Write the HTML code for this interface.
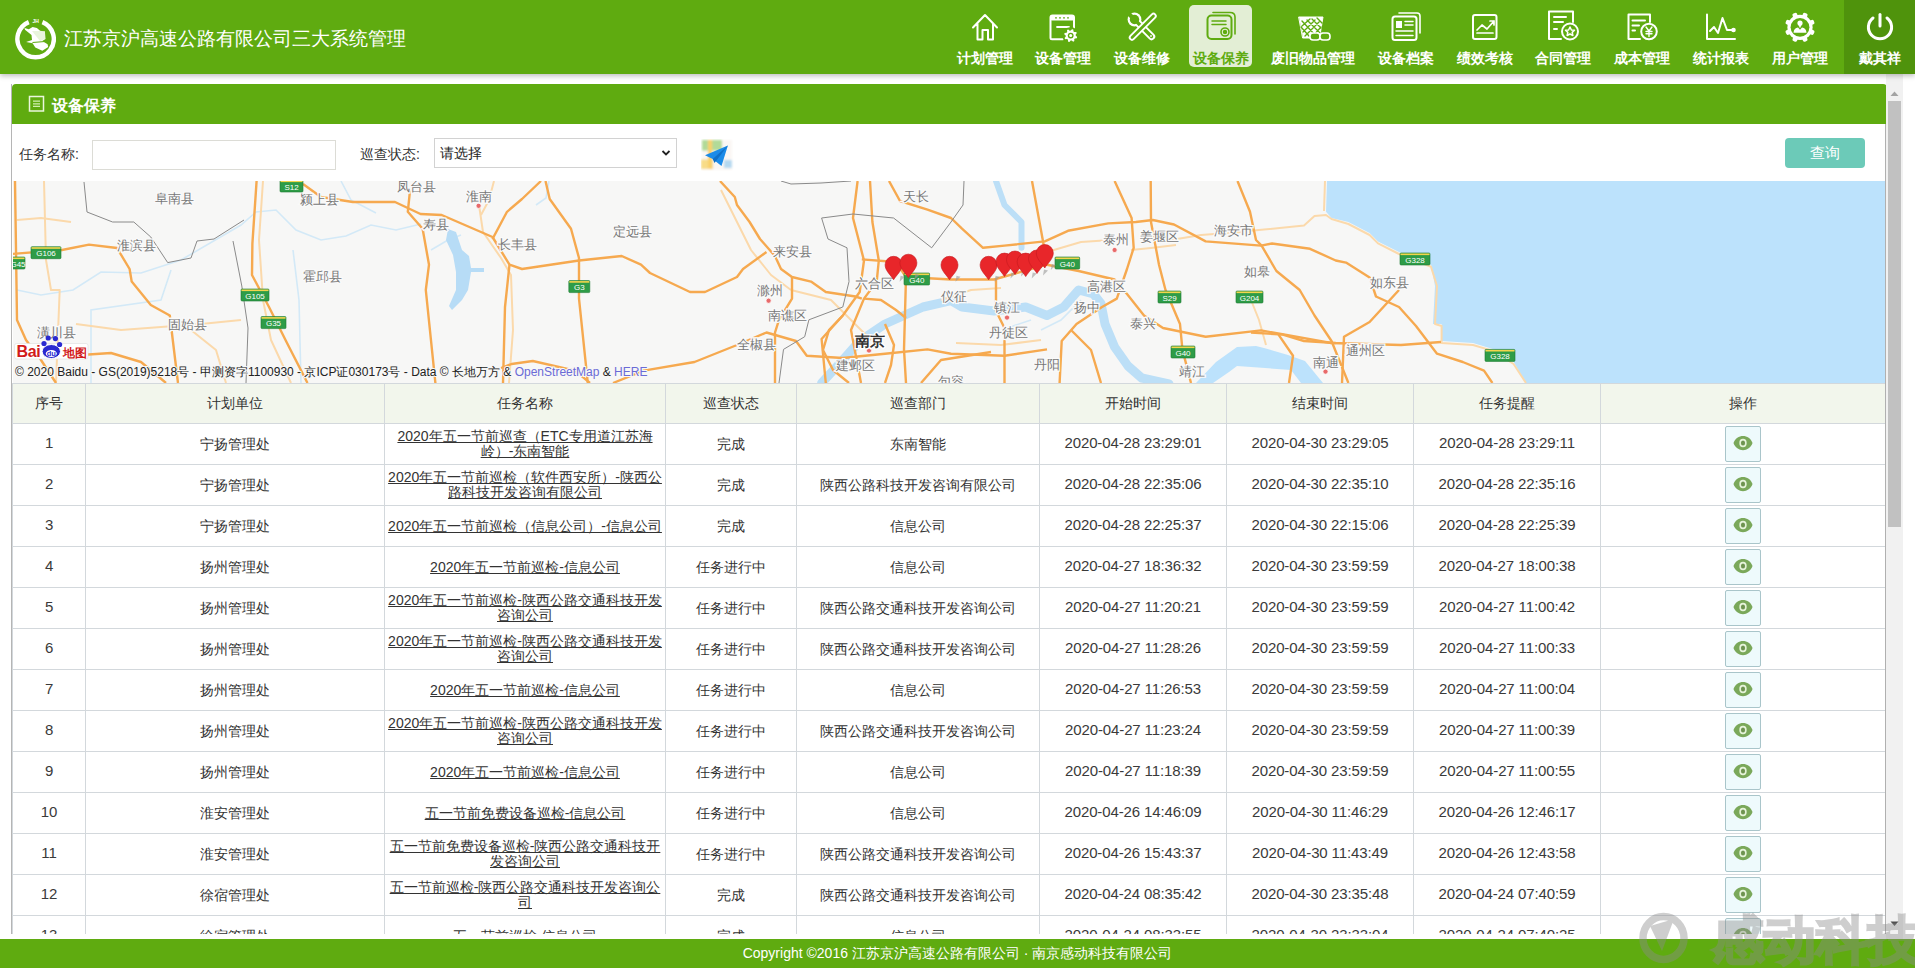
<!DOCTYPE html>
<html><head><meta charset="utf-8">
<style>
*{box-sizing:border-box;margin:0;padding:0}
html,body{width:1915px;height:968px;overflow:hidden;background:#fff;font-family:"Liberation Sans",sans-serif;color:#333}
.abs{position:absolute}
#top{left:0;top:0;width:1915px;height:74px;background:#5fab10;z-index:5;box-shadow:0 2px 5px rgba(0,0,0,.25)}

#title{left:64px;top:26.5px;font-size:18.7px;color:#fff;white-space:nowrap;line-height:24px}
.navl{top:49px;width:120px;text-align:center;font-size:14.2px;font-weight:bold;line-height:18px;white-space:nowrap}
.nav{top:0;height:74px;text-align:center;color:#fff;font-size:14.2px;font-weight:bold;white-space:nowrap}
.nav .lbl{position:absolute;left:0;right:0;top:49px;line-height:18px}
.nav svg{position:absolute;left:50%;top:11px;margin-left:-16px;width:32px;height:32px}
.nav.act .bg{position:absolute;left:0;top:5px;width:63px;height:62px;background:#e3eed5;border-radius:5px}
.nav.act{color:#5fab10}
#user{left:1843.5px;top:0;width:72px;height:74px;background:#4f930c}
#content{left:0;top:74px;width:1886px;height:860px;background:#fff;overflow:hidden}
#panel{left:11px;top:10px;width:1875px;height:880px;background:#fff;border-left:1px solid #b5b5b5}
#phead{left:0;top:0;width:1875px;height:40px;background:#5fab10;border-radius:4px 4px 0 0;color:#fff;font-weight:bold;font-size:15px}
#sb{left:1886px;top:74px;width:17px;height:865px;background:#f1f1f1}
.lbl{font-size:14px;line-height:18px;color:#333;margin-top:1.5px}
#tbl{border-collapse:collapse;table-layout:fixed;width:1873px}
#tbl th,#tbl td{border:1px solid #d3d8dc;text-align:center;font-size:14px;color:#333;font-weight:normal;padding:0 1px;height:41px;vertical-align:middle;line-height:15px}
#tbl th{height:40px;background:#f2f6ec}
#tbl td.n{font-size:15px;letter-spacing:-0.12px;color:#3a3a3a;padding-bottom:3px}
#tbl a{text-decoration:underline;color:#333}
.eye{display:inline-block;width:36px;height:36px;border:1px solid #a9c5ca;background:#eefafc;border-radius:2px;padding-top:8px;vertical-align:middle}
.eye svg{display:block;margin:0 auto}
#foot{left:0;top:939px;width:1915px;height:29px;background:#5fab10;color:#fff;font-size:14px;text-align:center;line-height:29px}
</style></head><body>
<div id="top" class="abs">
  <svg id="logo" class="abs" viewBox="0 0 42 46" style="left:14px;top:17px;width:42px;height:46px"><path d="M28.42 5.13 A18.2 18.2 0 1 1 14.78 5.13" fill="none" stroke="#fff" stroke-width="4.4"/><text x="21.6" y="5.6" font-size="5" font-weight="bold" fill="#fff" text-anchor="middle">JH</text><polygon points="10.5,11.1 14.8,12.2 18.6,10.1 22.9,11.1 26.1,13.8 30.9,14.4 31.5,21.9 28.3,24.0 33.6,27.3 34.2,29.9 28.3,33.7 21.3,30.5 18.6,26.2 12.1,25.1 18.0,23.0 17.5,18.1 11.0,12.7" fill="#fff"/><path d="M18.5 25.5 L31 24.5" stroke="#5fab10" stroke-width="1.2"/><path d="M18 14 L26 24 L31 22 L31 14Z" fill="#d8ecc4" opacity=".6"/></svg>
  <div id="title" class="abs">江苏京沪高速公路有限公司三大系统管理</div>
<div id="user" class="abs"></div>
<div class="abs" style="left:1189px;top:5px;width:63px;height:62px;background:#e3eed5;border-radius:5px"></div>
<div class="abs navl" style="left:924.5px;color:#fff">计划管理</div>
<div class="abs navl" style="left:1003px;color:#fff">设备管理</div>
<div class="abs navl" style="left:1082px;color:#fff">设备维修</div>
<div class="abs navl" style="left:1160.7px;color:#5fab10">设备保养</div>
<div class="abs navl" style="left:1253px;color:#fff">废旧物品管理</div>
<div class="abs navl" style="left:1345.5px;color:#fff">设备档案</div>
<div class="abs navl" style="left:1424.5px;color:#fff">绩效考核</div>
<div class="abs navl" style="left:1503px;color:#fff">合同管理</div>
<div class="abs navl" style="left:1582px;color:#fff">成本管理</div>
<div class="abs navl" style="left:1660.5px;color:#fff">统计报表</div>
<div class="abs navl" style="left:1739.5px;color:#fff">用户管理</div>
<div class="abs navl" style="left:1819.5px;color:#fff">戴其祥</div>
<svg class="abs" style="left:0;top:0" width="1915" height="74" viewBox="0 0 1915 74" fill="none" stroke="#fff" stroke-width="2" stroke-linejoin="round" stroke-linecap="round">
<!-- home -->
<path d="M973 27.5 L985 15 L997 27.5 M977.5 24 V39.5 H982.5 V30 H988 V39.5 H993 V24"/>
<!-- calendar gear -->
<path d="M1063 39.2 H1052 Q1050.5 39.2 1050.5 37.7 V17.5 Q1050.5 15.5 1052.5 15.5 H1072 Q1074 15.5 1074 17.5 V28.5"/>
<rect x="1050.5" y="15" width="23.5" height="5.5" rx="1.5" fill="#fff" stroke="none"/>
<circle cx="1056" cy="17.8" r="0.9" fill="#5fab10" stroke="none"/><circle cx="1060" cy="17.8" r="0.9" fill="#5fab10" stroke="none"/><circle cx="1064" cy="17.8" r="0.9" fill="#5fab10" stroke="none"/><circle cx="1068" cy="17.8" r="0.9" fill="#5fab10" stroke="none"/>
<path d="M1057 27 H1069" stroke-width="1.8"/>
<circle cx="1070.7" cy="35.6" r="8.3" fill="#5fab10" stroke="none"/>
<path d="M1077.17 36.91 L1076.79 38.15 L1074.85 38.39 L1074.22 39.15 L1074.35 41.10 L1073.20 41.71 L1071.66 40.51 L1070.68 40.60 L1069.39 42.07 L1068.15 41.69 L1067.91 39.75 L1067.15 39.12 L1065.20 39.25 L1064.59 38.10 L1065.79 36.56 L1065.70 35.58 L1064.23 34.29 L1064.61 33.05 L1066.55 32.81 L1067.18 32.05 L1067.05 30.10 L1068.20 29.49 L1069.74 30.69 L1070.72 30.60 L1072.01 29.13 L1073.25 29.51 L1073.49 31.45 L1074.25 32.08 L1076.20 31.95 L1076.81 33.10 L1075.61 34.64 L1075.70 35.62Z" fill="#fff" stroke="none"/>
<circle cx="1070.7" cy="35.6" r="2.9" fill="#5fab10" stroke="none"/>
<circle cx="1070.7" cy="35.6" r="1.5" fill="#fff" stroke="none"/>
<!-- tools -->
<g stroke-linecap="round" stroke="none">
<circle cx="1134.5" cy="19.5" r="6.9" fill="#fff"/>
<path d="M1134.5 19.5 L1151.5 36.5" stroke="#fff" stroke-width="7.4"/>
<circle cx="1134.5" cy="19.5" r="4.7" fill="#5fab10"/>
<path d="M1137 22 L1151.5 36.5" stroke="#5fab10" stroke-width="3.3"/>
<path d="M1134.5 19.5 L1127 12" stroke="#5fab10" stroke-width="4.2" stroke-linecap="butt"/>
<circle cx="1151" cy="36" r="0.9" fill="#fff"/>
<path d="M1153.5 16 L1132 37.5" stroke="#fff" stroke-width="6.4"/>
<path d="M1153.5 16 L1132 37.5" stroke="#5fab10" stroke-width="2.6"/>
</g>
<!-- active: cards -->
<g stroke="#5fab10">
<rect x="1207.5" y="15.5" width="24" height="23.5" rx="4"/>
<path d="M1213 12.5 H1230 Q1235 12.5 1235 17 V34" stroke-width="1.6"/>
<path d="M1212 21 H1226 M1212 24.5 H1226" stroke-width="1.5"/>
<circle cx="1225" cy="32" r="4" stroke-width="1.6"/>
<circle cx="1225" cy="32" r="1.2" fill="#5fab10"/>
</g>
<!-- basket -->
<path d="M1299 17 H1323 L1319.5 38 H1303Z" fill="#fff" stroke-width="1"/>
<path d="M1302 21 L1316 36 M1307 20 L1320 33 M1312 19 L1321 28 M1317 18 L1322 23 M1301 27 L1309 36 M1320 21 L1305 36 M1315 20 L1303 32 M1310 19 L1302 26 M1321 27 L1313 36" stroke="#5fab10" stroke-width="1.4"/>
<rect x="1310" y="33" width="10" height="7" rx="3" fill="#5fab10" stroke-width="1.6"/>
<rect x="1320" y="33" width="10" height="7" rx="3" fill="#5fab10" stroke-width="1.6"/>
<!-- archive -->
<rect x="1392.5" y="16.5" width="24" height="23.5" rx="2.5"/>
<path d="M1399 13 H1417 Q1420 13 1420 16 V33" stroke-width="1.6"/>
<rect x="1396" y="21" width="6" height="7" fill="#fff" stroke="none"/>
<path d="M1405 21.5 H1413 M1405 25 H1413 M1396 31 H1413 M1396 35.5 H1413" stroke-width="1.5"/>
<!-- perf chart -->
<rect x="1473" y="15" width="23.5" height="24" rx="2"/>
<path d="M1477 30 L1482 25 L1487 29 L1494 21 M1490 21 H1494 V25 M1477 33 H1493" stroke-width="1.7"/>
<!-- contract -->
<path d="M1561 39 H1549 V11.5 H1573 V22" />
<path d="M1554 17 H1566 M1554 22 H1563 M1554 29 H1557" stroke-width="2"/>
<circle cx="1570" cy="31.5" r="8"/>
<path d="M1570 27 L1571.4 30 L1574.5 30.3 L1572.2 32.4 L1572.9 35.5 L1570 34 L1567.1 35.5 L1567.8 32.4 L1565.5 30.3 L1568.6 30Z" stroke-width="1.5"/>
<!-- cost -->
<path d="M1640 39 H1628.5 V14.5 H1650 V22"/>
<path d="M1632.5 20.5 H1645 M1632.5 25.5 H1639 M1632.5 30.5 H1635" stroke-width="2"/>
<circle cx="1649" cy="31.5" r="7.8"/>
<path d="M1646 27 L1649 31 L1652 27 M1649 31 V36.5 M1646 31.5 H1652 M1646 33.8 H1652" stroke-width="1.4"/>
<!-- stats -->
<path d="M1707 14.5 V39 H1735"/>
<path d="M1710 31 L1714 27 L1718 33 L1722.5 18 L1727 30 H1733" stroke-width="2"/>
<circle cx="1733.5" cy="30" r="1.3" fill="#fff"/>
<!-- user gear -->
<g stroke="none"><circle cx="1800" cy="27.3" r="12.6" fill="#fff"/><rect x="1797.6" y="12.100000000000001" width="4.8" height="6" rx="1.6" fill="#fff" transform="rotate(22.5 1800 27.3)"/><rect x="1797.6" y="12.100000000000001" width="4.8" height="6" rx="1.6" fill="#fff" transform="rotate(67.5 1800 27.3)"/><rect x="1797.6" y="12.100000000000001" width="4.8" height="6" rx="1.6" fill="#fff" transform="rotate(112.5 1800 27.3)"/><rect x="1797.6" y="12.100000000000001" width="4.8" height="6" rx="1.6" fill="#fff" transform="rotate(157.5 1800 27.3)"/><rect x="1797.6" y="12.100000000000001" width="4.8" height="6" rx="1.6" fill="#fff" transform="rotate(202.5 1800 27.3)"/><rect x="1797.6" y="12.100000000000001" width="4.8" height="6" rx="1.6" fill="#fff" transform="rotate(247.5 1800 27.3)"/><rect x="1797.6" y="12.100000000000001" width="4.8" height="6" rx="1.6" fill="#fff" transform="rotate(292.5 1800 27.3)"/><rect x="1797.6" y="12.100000000000001" width="4.8" height="6" rx="1.6" fill="#fff" transform="rotate(337.5 1800 27.3)"/><circle cx="1800" cy="27.3" r="9.4" fill="#5fab10"/><circle cx="1800" cy="23.1" r="2.6" fill="#fff"/><path d="M1798.4 24.8 L1800 28.3 L1801.6 24.8Z" fill="#fff"/><path d="M1793.5 32.8 Q1794 27.8 1798 27.5 L1800 29.8 L1802 27.5 Q1806 27.8 1806.5 32.8Z" fill="#fff"/></g>
<!-- power -->
<path d="M1873 18 A11.6 11.6 0 1 0 1887 18" stroke-width="3"/>
<path d="M1880 14.5 V26" stroke-width="3"/>
</svg>
</div>
<div id="content" class="abs">
  <div id="panel" class="abs">
    <div id="phead" class="abs"><svg class="abs" style="left:15.5px;top:11px" width="17" height="17" viewBox="0 0 17 17" fill="none" stroke="#eaf6dc" stroke-width="1.5"><rect x="1.5" y="1.5" width="14" height="14.5"/><path d="M5 6.2H12M5 8.8H12M5 11.4H12" stroke-width="1.3" stroke="#cfeeb0"/></svg><span class="abs" style="left:40px;top:10.5px;line-height:22px;font-size:16px">设备保养</span></div>
<div class="abs lbl" style="left:7px;top:59px">任务名称:</div>
<div class="abs" style="left:80px;top:56px;width:244px;height:30px;border:1px solid #dcdcd6;background:#fff"></div>
<div class="abs lbl" style="left:348px;top:59px">巡查状态:</div>
<div class="abs" style="left:422px;top:54px;width:243px;height:30px;border:1px solid #d2d2d2;background:#fff"><span class="abs" style="left:5px;top:5px;font-size:14px;line-height:18px;color:#222">请选择</span><svg class="abs" style="left:226px;top:10px" width="10" height="8" viewBox="0 0 10 8"><path d="M1.5 2 L5 5.5 L8.5 2" fill="none" stroke="#222" stroke-width="1.8"/></svg></div>
<svg class="abs" style="left:689px;top:55px" width="34" height="34" viewBox="0 0 34 34"><defs><filter id="bl" x="-20%" y="-20%" width="140%" height="140%"><feGaussianBlur stdDeviation="0.9"/></filter></defs><g filter="url(#bl)"><rect x="1" y="1" width="30" height="30" fill="#faf7f4"/><rect x="1" y="1" width="20" height="10.6" fill="#b2da98"/><rect x="0" y="20.4" width="12" height="9.6" fill="#f8dc88"/><rect x="7" y="1" width="4.2" height="29" fill="#f9d06a"/><rect x="23" y="21" width="7.8" height="8" fill="#b3d8f0"/></g><path d="M4 16.3 L26.9 6.5 L20.5 27.1 L11.7 19.9Z" fill="#1b8be8"/><path d="M11.7 19.9 L26.9 6.5 L13.5 24Z" fill="#0f70c8"/></svg>
<div class="abs" style="left:1773px;top:54px;width:80px;height:30px;background:#6ccab8;border-radius:4px;color:#fff;font-size:15px;text-align:center;line-height:30px">查询</div>
<div id="map" class="abs" style="left:1px;top:97px;width:1873px;height:202px;background:#f7f7f5;overflow:hidden"><svg width="1873" height="202" viewBox="12 181 1873 202" style="position:absolute;left:0;top:0">
<rect x="12" y="181" width="1873" height="202" fill="#f7f7f6"/>
<path d="M1326 181 L1325 211.8 L1330.5 218 L1347.4 222 L1368.6 233 L1377 241.4 L1398 252 L1430 264.7 L1434 286 L1432 324 L1440.6 324 L1440.6 341 L1472 343 L1493.5 349.4 L1512.6 362 L1525 383 L1885 383 L1885 181 Z" fill="#bce2fc"/>
<path d="M1195 383 L1215 362 L1236 347 L1255 346 L1263 348 L1287 355 L1304 361 L1322 383 L1300 383 L1290 370 L1236 366 L1228 372 L1212 383Z" fill="#bce2fc"/>
<path d="M16.0 290.0 L40.0 295.0 L72.0 290.0 L100.0 272.0 L140.0 273.0 L180.0 260.0 L240.0 225.0 L255.0 212.0 L275.0 210.0 L295.0 230.0 L320.0 240.0 L345.0 236.0 L370.0 225.0 L395.0 230.0 L420.0 224.0" fill="none" stroke="#d3e9f7" stroke-width="1.6"/>
<path d="M90.0 383.0 L90.0 310.0 L160.0 300.0 L170.0 270.0" fill="none" stroke="#d3e9f7" stroke-width="1.6"/>
<path d="M300.0 383.0 L298.0 300.0 L292.0 250.0" fill="none" stroke="#d3e9f7" stroke-width="1.6"/>
<path d="M340.0 181.0 L350.0 200.0 L375.0 213.0" fill="none" stroke="#d3e9f7" stroke-width="1.6"/>
<path d="M548.0 181.0 L545.0 198.0 L535.0 205.0" fill="none" stroke="#d3e9f7" stroke-width="1.6"/>
<path d="M430.0 250.0 L447.0 240.0 L460.0 235.0" fill="none" stroke="#d3e9f7" stroke-width="1.6"/>
<path d="M1080.0 300.0 L1060.0 320.0 L1040.0 330.0" fill="none" stroke="#d3e9f7" stroke-width="1.6"/>
<path d="M1000.0 330.0 L1030.0 320.0" fill="none" stroke="#d3e9f7" stroke-width="1.6"/>
<path d="M447 229 L455 232 L461 250 L468 256 L470 268 L483 268 L483 272 L470 272 L467 290 L461 300 L451 310 L448 306 L455 290 L455 272 L452 255 L445 240 Z" fill="#b7dcf6"/>
<path d="M820.6 383.0 L841.8 360.0 L858.7 341.0 L884.0 324.0 L922.0 307.0 L950.0 300.7 L961.0 307.0 L993.0 311.0 L1024.7 307.0 L1046.0 315.5 L1062.8 307.0 L1077.6 290.0 L1092.5 294.0 L1100.0 303.6 L1104.0 324.0 L1113.6 347.0 L1127.0 366.0 L1140.7 378.0 L1168.0 384.0" fill="none" stroke="#bcdff7" stroke-width="9" stroke-linejoin="round" stroke-linecap="round"/>
<path d="M995.0 181.0 L1003.5 205.0 L1020.5 222.0 L1020.5 247.8" fill="none" stroke="#bcdff7" stroke-width="6" stroke-linejoin="round" stroke-linecap="round"/>
<path d="M43.0 181.0 L45.0 260.0 L50.0 290.0 L58.7 290.0 L55.0 383.0" fill="none" stroke="#fbd9ab" stroke-width="2" stroke-linejoin="round"/>
<path d="M16.0 220.0 L40.0 218.0 L70.0 222.0" fill="none" stroke="#fbd9ab" stroke-width="2" stroke-linejoin="round"/>
<path d="M75.0 324.0 L120.0 330.0 L200.0 324.0 L240.0 320.0" fill="none" stroke="#fbd9ab" stroke-width="2" stroke-linejoin="round"/>
<path d="M190.0 330.0 L215.0 350.0 L225.0 383.0" fill="none" stroke="#fbd9ab" stroke-width="2" stroke-linejoin="round"/>
<path d="M262.0 181.0 L258.0 240.0 L262.0 300.0 L270.0 340.0 L290.0 383.0" fill="none" stroke="#fbd9ab" stroke-width="2" stroke-linejoin="round"/>
<path d="M478.0 205.0 L482.0 232.0 L500.0 258.0 L510.0 275.0 L512.0 330.0 L508.0 383.0" fill="none" stroke="#fbd9ab" stroke-width="2" stroke-linejoin="round"/>
<path d="M493.0 181.0 L488.0 200.0 L480.0 215.0" fill="none" stroke="#fbd9ab" stroke-width="2" stroke-linejoin="round"/>
<path d="M720.0 190.0 L740.0 230.0 L750.0 250.0 L770.0 275.0 L790.0 290.0" fill="none" stroke="#fbd9ab" stroke-width="2" stroke-linejoin="round"/>
<path d="M790.0 290.0 L830.0 300.0 L850.0 320.0 L870.0 340.0" fill="none" stroke="#fbd9ab" stroke-width="2" stroke-linejoin="round"/>
<path d="M1250.0 230.8 L1303.0 225.5 L1313.5 216.0 L1325.0 215.0 L1330.5 219.0 L1347.4 224.0 L1368.6 235.0 L1377.0 243.4 L1398.0 254.0 L1430.0 266.7 L1436.0 286.0 L1434.0 324.0 L1440.6 326.0 L1440.6 343.0 L1472.0 345.0 L1493.5 351.4 L1512.6 364.0 L1525.0 383.0" fill="none" stroke="#fbd9ab" stroke-width="2" stroke-linejoin="round"/>
<path d="M1324.0 181.0 L1323.0 211.0" fill="none" stroke="#fbd9ab" stroke-width="2" stroke-linejoin="round"/>
<path d="M1046.0 252.0 L1080.0 242.0 L1110.0 240.0" fill="none" stroke="#fbd9ab" stroke-width="2" stroke-linejoin="round"/>
<path d="M1130.0 250.0 L1150.0 248.0 L1175.0 245.0" fill="none" stroke="#fbd9ab" stroke-width="2" stroke-linejoin="round"/>
<path d="M1170.0 240.0 L1200.0 235.0 L1240.0 232.0" fill="none" stroke="#fbd9ab" stroke-width="2" stroke-linejoin="round"/>
<path d="M940.0 300.0 L970.0 290.0 L1000.0 288.0" fill="none" stroke="#fbd9ab" stroke-width="2" stroke-linejoin="round"/>
<path d="M1250.0 300.0 L1258.0 320.0 L1265.0 345.0" fill="none" stroke="#fbd9ab" stroke-width="2" stroke-linejoin="round"/>
<path d="M955.0 343.0 L1000.0 345.0 L1040.0 340.0" fill="none" stroke="#fbd9ab" stroke-width="2" stroke-linejoin="round"/>
<path d="M14.0 181.0 L15.0 250.0 L16.0 320.0 L25.0 340.0 L40.0 360.0 L55.0 383.0" fill="none" stroke="#f6a94f" stroke-width="2.4" stroke-linejoin="round"/>
<path d="M10.0 254.0 L61.0 250.0 L88.0 244.6 L116.0 248.0 L128.6 269.0 L130.7 281.6 L149.8 305.0 L168.8 315.5 L177.0 383.0" fill="none" stroke="#f6a94f" stroke-width="2.4" stroke-linejoin="round"/>
<path d="M255.6 181.0 L251.4 243.5 L251.0 275.0 L268.0 307.0 L285.0 341.0 L306.5 383.0" fill="none" stroke="#f6a94f" stroke-width="2.4" stroke-linejoin="round"/>
<path d="M80.0 355.0 L110.0 353.0 L140.0 362.0 L165.0 383.0" fill="none" stroke="#f6a94f" stroke-width="2.4" stroke-linejoin="round"/>
<path d="M302.0 184.0 L320.0 197.0 L351.8 202.0 L394.0 202.0 L419.5 214.0 L440.7 215.0 L491.5 237.0 L508.5 264.7 L521.0 269.0 L578.0 260.5 L620.7 256.0 L640.0 264.7 L649.0 273.0 L689.0 292.0 L704.0 292.0 L736.0 277.0 L742.0 269.0 L765.5 252.0" fill="none" stroke="#f6a94f" stroke-width="2.4" stroke-linejoin="round"/>
<path d="M409.0 190.6 L406.8 211.8 L421.6 228.7 L428.0 264.7 L424.8 290.0 L434.4 383.0" fill="none" stroke="#f6a94f" stroke-width="2.4" stroke-linejoin="round"/>
<path d="M540.0 181.0 L521.0 199.0 L506.0 211.8 L491.5 239.0" fill="none" stroke="#f6a94f" stroke-width="2.4" stroke-linejoin="round"/>
<path d="M544.5 181.0 L548.7 199.0 L570.0 228.7 L578.0 258.0 L578.0 298.6 L586.8 383.0" fill="none" stroke="#f6a94f" stroke-width="2.4" stroke-linejoin="round"/>
<path d="M508.5 264.7 L504.0 307.0 L502.0 383.0" fill="none" stroke="#f6a94f" stroke-width="2.4" stroke-linejoin="round"/>
<path d="M500.0 368.0 L510.6 364.0 L531.8 361.0 L574.0 370.6 L589.0 383.0" fill="none" stroke="#f6a94f" stroke-width="2.4" stroke-linejoin="round"/>
<path d="M719.0 181.0 L733.8 197.0 L736.0 205.0 L748.6 222.0 L759.0 239.0 L774.0 256.0 L780.0 269.0 L791.0 277.0 L810.0 281.6 L824.8 292.0 L854.5 296.5 L860.8 298.6" fill="none" stroke="#f6a94f" stroke-width="2.4" stroke-linejoin="round"/>
<path d="M791.0 277.0 L791.0 298.6 L778.0 319.8 L774.0 332.5 L774.0 383.0" fill="none" stroke="#f6a94f" stroke-width="2.4" stroke-linejoin="round"/>
<path d="M612.0 383.0 L642.7 370.6 L693.5 362.0 L736.0 345.0 L765.5 332.5 L795.0 341.0 L805.8 355.8 L841.8 358.0 L884.0 353.7 L926.5 349.4 L950.0 353.7 L1003.5 355.8 L1046.0 349.4" fill="none" stroke="#f6a94f" stroke-width="2.4" stroke-linejoin="round"/>
<path d="M856.6 181.0 L852.0 218.0 L863.0 260.5 L858.7 292.0 L841.8 315.5 L820.6 339.0 L824.8 383.0" fill="none" stroke="#f6a94f" stroke-width="2.4" stroke-linejoin="round"/>
<path d="M869.0 181.0 L871.4 222.0 L877.8 260.5 L875.7 281.6 L863.0 298.6 L850.0 330.0 L860.0 383.0" fill="none" stroke="#f6a94f" stroke-width="2.4" stroke-linejoin="round"/>
<path d="M860.8 259.4 L895.0 262.0 L905.0 277.0 L950.0 279.5 L993.0 279.5 L1046.0 264.7 L1077.6 271.0 L1113.6 279.5 L1126.0 294.0 L1143.0 315.5 L1162.0 328.0 L1204.7 336.7 L1260.0 330.4 L1330.0 343.0 L1400.0 345.0 L1440.0 342.0" fill="none" stroke="#f6a94f" stroke-width="2.4" stroke-linejoin="round"/>
<path d="M888.0 181.0 L899.0 201.0 L926.5 209.6 L950.0 218.0 L961.0 228.7 L982.0 247.8 L1003.5 245.6 L1043.8 241.4 L1067.0 230.8 L1107.3 223.4 L1134.8 222.0 L1151.8 220.0 L1173.0 224.5 L1204.7 241.4 L1260.0 245.6 L1271.0 243.5 L1309.0 248.8 L1334.7 260.5 L1345.0 262.6 L1368.6 277.4 L1375.0 296.5 L1398.0 307.0 L1415.0 326.0 L1436.0 353.7 L1461.8 362.0 L1483.0 370.6 L1491.4 383.0" fill="none" stroke="#f6a94f" stroke-width="2.4" stroke-linejoin="round"/>
<path d="M905.0 277.0 L903.0 349.4 L905.0 383.0" fill="none" stroke="#f6a94f" stroke-width="2.4" stroke-linejoin="round"/>
<path d="M1031.0 181.0 L1041.6 239.0 L1046.0 264.7" fill="none" stroke="#f6a94f" stroke-width="2.4" stroke-linejoin="round"/>
<path d="M1113.6 181.0 L1130.6 218.0 L1132.7 247.8 L1126.0 269.0 L1115.8 298.6 L1101.0 307.0 L1075.5 324.0 L1060.7 341.0 L1058.6 383.0" fill="none" stroke="#f6a94f" stroke-width="2.4" stroke-linejoin="round"/>
<path d="M1149.7 181.0 L1150.0 222.0 L1158.0 264.7 L1164.5 290.0 L1179.0 324.0 L1181.4 349.4 L1190.0 383.0" fill="none" stroke="#f6a94f" stroke-width="2.4" stroke-linejoin="round"/>
<path d="M1236.5 181.0 L1249.0 211.8 L1255.0 240.0 L1260.6 245.6 L1275.4 271.0 L1298.7 290.0 L1313.5 315.5 L1330.5 341.0 L1347.4 383.0" fill="none" stroke="#f6a94f" stroke-width="2.4" stroke-linejoin="round"/>
<path d="M995.0 279.5 L995.0 311.0 L1003.5 328.0 L1003.5 383.0" fill="none" stroke="#f6a94f" stroke-width="2.4" stroke-linejoin="round"/>
<path d="M1398.0 290.0 L1368.6 322.0 L1343.0 336.7 L1341.0 383.0" fill="none" stroke="#f6a94f" stroke-width="2.4" stroke-linejoin="round"/>
<path d="M1250.0 332.5 L1281.8 334.6 L1303.0 341.0 L1334.7 343.0" fill="none" stroke="#f6a94f" stroke-width="2.4" stroke-linejoin="round"/>
<path d="M1277.5 334.6 L1292.0 355.8 L1288.0 383.0" fill="none" stroke="#f6a94f" stroke-width="2.4" stroke-linejoin="round"/>
<path d="M920.0 383.0 L940.0 360.0 L990.0 352.0" fill="none" stroke="#f6a94f" stroke-width="2.4" stroke-linejoin="round"/>
<path d="M841.8 315.5 L828.0 330.0 L822.0 350.0 L832.0 370.0 L848.0 383.0" fill="none" stroke="#f6a94f" stroke-width="2.4" stroke-linejoin="round"/>
<path d="M884.0 324.0 L893.0 345.0 L890.0 365.0 L884.0 383.0" fill="none" stroke="#f6a94f" stroke-width="2.4" stroke-linejoin="round"/>
<path d="M863.0 298.6 L880.0 300.0 L895.0 310.0 L905.0 318.0" fill="none" stroke="#f6a94f" stroke-width="2.4" stroke-linejoin="round"/>
<path d="M1100.0 383.0 L1090.0 350.0 L1070.0 330.0" fill="none" stroke="#f6a94f" stroke-width="2.4" stroke-linejoin="round"/>
<path d="M83.0 182.0 L86.0 212.0 L111.6 222.0 L132.8 222.0 L149.8 237.0 L166.7 262.6 L190.0 258.0 L196.0 241.0 L213.0 239.0 L243.0 220.0" fill="none" stroke="#8a8a8a" stroke-width="1"/>
<path d="M232.0 241.0 L240.8 286.0 L247.0 328.0 L245.0 383.0" fill="none" stroke="#8a8a8a" stroke-width="1"/>
<path d="M820.6 218.0 L852.0 214.0 L892.6 218.0 L930.7 247.8 L950.0 222.0 L962.0 205.0 L963.0 181.0" fill="none" stroke="#8a8a8a" stroke-width="1"/>
<path d="M820.6 218.0 L827.0 239.0 L846.0 247.8 L848.0 281.6 L841.8 307.0 L807.9 319.8 L803.7 336.7 L782.5 349.4 L778.0 383.0" fill="none" stroke="#8a8a8a" stroke-width="1"/>
<path d="M780.0 181.0 L790.0 184.0 L820.0 183.0 L850.0 181.0" fill="none" stroke="#8a8a8a" stroke-width="1"/>
<circle cx="477.6" cy="205.8" r="2.6" fill="#e86a6a" stroke="#fff" stroke-width="0.8"/>
<circle cx="767.6" cy="300.7" r="2.6" fill="#e86a6a" stroke="#fff" stroke-width="0.8"/>
<circle cx="868" cy="350.5" r="2.6" fill="#e86a6a" stroke="#fff" stroke-width="0.8"/>
<circle cx="1006" cy="317.6" r="2.6" fill="#e86a6a" stroke="#fff" stroke-width="0.8"/>
<circle cx="1113.6" cy="250" r="2.6" fill="#e86a6a" stroke="#fff" stroke-width="0.8"/>
<circle cx="1324.5" cy="371.6" r="2.6" fill="#e86a6a" stroke="#fff" stroke-width="0.8"/>
<text x="173" y="202.5" text-anchor="middle" font-size="12.5" fill="#777" stroke="#fafafa" stroke-width="2.5" paint-order="stroke">阜南县</text>
<text x="135" y="250.1" text-anchor="middle" font-size="12.5" fill="#777" stroke="#fafafa" stroke-width="2.5" paint-order="stroke">淮滨县</text>
<text x="321" y="280.5" text-anchor="middle" font-size="12.5" fill="#777" stroke="#fafafa" stroke-width="2.5" paint-order="stroke">霍邱县</text>
<text x="186" y="328.5" text-anchor="middle" font-size="12.5" fill="#777" stroke="#fafafa" stroke-width="2.5" paint-order="stroke">固始县</text>
<text x="55" y="337.0" text-anchor="middle" font-size="12.5" fill="#777" stroke="#fafafa" stroke-width="2.5" paint-order="stroke">潢川县</text>
<text x="318" y="203.5" text-anchor="middle" font-size="12.5" fill="#777" stroke="#fafafa" stroke-width="2.5" paint-order="stroke">颍上县</text>
<text x="415" y="190.5" text-anchor="middle" font-size="12.5" fill="#777" stroke="#fafafa" stroke-width="2.5" paint-order="stroke">凤台县</text>
<text x="478" y="200.5" text-anchor="middle" font-size="12.5" fill="#777" stroke="#fafafa" stroke-width="2.5" paint-order="stroke">淮南</text>
<text x="435" y="229.0" text-anchor="middle" font-size="12.5" fill="#777" stroke="#fafafa" stroke-width="2.5" paint-order="stroke">寿县</text>
<text x="516" y="249.1" text-anchor="middle" font-size="12.5" fill="#777" stroke="#fafafa" stroke-width="2.5" paint-order="stroke">长丰县</text>
<text x="631" y="235.5" text-anchor="middle" font-size="12.5" fill="#777" stroke="#fafafa" stroke-width="2.5" paint-order="stroke">定远县</text>
<text x="791" y="255.5" text-anchor="middle" font-size="12.5" fill="#777" stroke="#fafafa" stroke-width="2.5" paint-order="stroke">来安县</text>
<text x="768.7" y="294.5" text-anchor="middle" font-size="12.5" fill="#777" stroke="#fafafa" stroke-width="2.5" paint-order="stroke">滁州</text>
<text x="786.7" y="320.0" text-anchor="middle" font-size="12.5" fill="#777" stroke="#fafafa" stroke-width="2.5" paint-order="stroke">南谯区</text>
<text x="755" y="348.5" text-anchor="middle" font-size="12.5" fill="#777" stroke="#fafafa" stroke-width="2.5" paint-order="stroke">全椒县</text>
<text x="873.5" y="288.3" text-anchor="middle" font-size="12.5" fill="#777" stroke="#fafafa" stroke-width="2.5" paint-order="stroke">六合区</text>
<text x="854.5" y="369.5" text-anchor="middle" font-size="12.5" fill="#777" stroke="#fafafa" stroke-width="2.5" paint-order="stroke">建邺区</text>
<text x="914.8" y="200.5" text-anchor="middle" font-size="12.5" fill="#777" stroke="#fafafa" stroke-width="2.5" paint-order="stroke">天长</text>
<text x="952.7" y="301.0" text-anchor="middle" font-size="12.5" fill="#777" stroke="#fafafa" stroke-width="2.5" paint-order="stroke">仪征</text>
<text x="1005.6" y="311.5" text-anchor="middle" font-size="12.5" fill="#777" stroke="#fafafa" stroke-width="2.5" paint-order="stroke">镇江</text>
<text x="1007.8" y="337.0" text-anchor="middle" font-size="12.5" fill="#777" stroke="#fafafa" stroke-width="2.5" paint-order="stroke">丹徒区</text>
<text x="1046" y="368.5" text-anchor="middle" font-size="12.5" fill="#777" stroke="#fafafa" stroke-width="2.5" paint-order="stroke">丹阳</text>
<text x="1086" y="311.5" text-anchor="middle" font-size="12.5" fill="#777" stroke="#fafafa" stroke-width="2.5" paint-order="stroke">扬中</text>
<text x="1105" y="290.5" text-anchor="middle" font-size="12.5" fill="#777" stroke="#fafafa" stroke-width="2.5" paint-order="stroke">高港区</text>
<text x="1142" y="327.5" text-anchor="middle" font-size="12.5" fill="#777" stroke="#fafafa" stroke-width="2.5" paint-order="stroke">泰兴</text>
<text x="1114.7" y="243.5" text-anchor="middle" font-size="12.5" fill="#777" stroke="#fafafa" stroke-width="2.5" paint-order="stroke">泰州</text>
<text x="1158" y="240.5" text-anchor="middle" font-size="12.5" fill="#777" stroke="#fafafa" stroke-width="2.5" paint-order="stroke">姜堰区</text>
<text x="1232" y="235.3" text-anchor="middle" font-size="12.5" fill="#777" stroke="#fafafa" stroke-width="2.5" paint-order="stroke">海安市</text>
<text x="1256" y="275.5" text-anchor="middle" font-size="12.5" fill="#777" stroke="#fafafa" stroke-width="2.5" paint-order="stroke">如皋</text>
<text x="1191" y="376.1" text-anchor="middle" font-size="12.5" fill="#777" stroke="#fafafa" stroke-width="2.5" paint-order="stroke">靖江</text>
<text x="950" y="385.5" text-anchor="middle" font-size="12.5" fill="#777" stroke="#fafafa" stroke-width="2.5" paint-order="stroke">句容</text>
<text x="1388.7" y="287.2" text-anchor="middle" font-size="12.5" fill="#777" stroke="#fafafa" stroke-width="2.5" paint-order="stroke">如东县</text>
<text x="1364" y="355.0" text-anchor="middle" font-size="12.5" fill="#777" stroke="#fafafa" stroke-width="2.5" paint-order="stroke">通州区</text>
<text x="1325" y="366.5" text-anchor="middle" font-size="12.5" fill="#777" stroke="#fafafa" stroke-width="2.5" paint-order="stroke">南通</text>
<text x="869" y="346" text-anchor="middle" font-size="15" font-weight="bold" fill="#333" stroke="#fff" stroke-width="2.5" paint-order="stroke">南京</text>
<rect x="30" y="246.7" width="30" height="12" rx="1" fill="#2e9c47" stroke="#1d7a33" stroke-width="0.6"/><rect x="30.5" y="247.2" width="29" height="1.6" fill="#f3d54c"/><text x="45.0" y="256.3" text-anchor="middle" font-size="8" fill="#fff">G106</text>
<rect x="10" y="257" width="14" height="12" rx="1" fill="#2e9c47" stroke="#1d7a33" stroke-width="0.6"/><rect x="10.5" y="257.5" width="13" height="1.6" fill="#f3d54c"/><text x="17.0" y="266.6" text-anchor="middle" font-size="8" fill="#fff">G45</text>
<rect x="240" y="289" width="28" height="12" rx="1" fill="#2e9c47" stroke="#1d7a33" stroke-width="0.6"/><rect x="240.5" y="289.5" width="27" height="1.6" fill="#f3d54c"/><text x="254.0" y="298.6" text-anchor="middle" font-size="8" fill="#fff">G105</text>
<rect x="260" y="316.6" width="25" height="12" rx="1" fill="#2e9c47" stroke="#1d7a33" stroke-width="0.6"/><rect x="260.5" y="317.1" width="24" height="1.6" fill="#f3d54c"/><text x="272.5" y="326.20000000000005" text-anchor="middle" font-size="8" fill="#fff">G35</text>
<rect x="279" y="180" width="23" height="12" rx="1" fill="#2e9c47" stroke="#1d7a33" stroke-width="0.6"/><rect x="279.5" y="180.5" width="22" height="1.6" fill="#f3d54c"/><text x="290.5" y="189.6" text-anchor="middle" font-size="8" fill="#fff">S12</text>
<rect x="567.8" y="280.6" width="21" height="12" rx="1" fill="#2e9c47" stroke="#1d7a33" stroke-width="0.6"/><rect x="568.3" y="281.1" width="20" height="1.6" fill="#f3d54c"/><text x="578.3" y="290.20000000000005" text-anchor="middle" font-size="8" fill="#fff">G3</text>
<rect x="903" y="273" width="25.6" height="12" rx="1" fill="#2e9c47" stroke="#1d7a33" stroke-width="0.6"/><rect x="903.5" y="273.5" width="24.6" height="1.6" fill="#f3d54c"/><text x="915.8" y="282.6" text-anchor="middle" font-size="8" fill="#fff">G40</text>
<rect x="1054" y="257" width="24.7" height="12" rx="1" fill="#2e9c47" stroke="#1d7a33" stroke-width="0.6"/><rect x="1054.5" y="257.5" width="23.7" height="1.6" fill="#f3d54c"/><text x="1066.35" y="266.6" text-anchor="middle" font-size="8" fill="#fff">G40</text>
<rect x="1157" y="291" width="23" height="12" rx="1" fill="#2e9c47" stroke="#1d7a33" stroke-width="0.6"/><rect x="1157.5" y="291.5" width="22" height="1.6" fill="#f3d54c"/><text x="1168.5" y="300.6" text-anchor="middle" font-size="8" fill="#fff">S29</text>
<rect x="1170" y="346" width="24" height="12" rx="1" fill="#2e9c47" stroke="#1d7a33" stroke-width="0.6"/><rect x="1170.5" y="346.5" width="23" height="1.6" fill="#f3d54c"/><text x="1182.0" y="355.6" text-anchor="middle" font-size="8" fill="#fff">G40</text>
<rect x="1235" y="291" width="27" height="12" rx="1" fill="#2e9c47" stroke="#1d7a33" stroke-width="0.6"/><rect x="1235.5" y="291.5" width="26" height="1.6" fill="#f3d54c"/><text x="1248.5" y="300.6" text-anchor="middle" font-size="8" fill="#fff">G204</text>
<rect x="1399" y="253" width="30" height="12" rx="1" fill="#2e9c47" stroke="#1d7a33" stroke-width="0.6"/><rect x="1399.5" y="253.5" width="29" height="1.6" fill="#f3d54c"/><text x="1414.0" y="262.6" text-anchor="middle" font-size="8" fill="#fff">G328</text>
<rect x="1484" y="349.4" width="30" height="12" rx="1" fill="#2e9c47" stroke="#1d7a33" stroke-width="0.6"/><rect x="1484.5" y="349.9" width="29" height="1.6" fill="#f3d54c"/><text x="1499.0" y="359.0" text-anchor="middle" font-size="8" fill="#fff">G328</text>
<path d="M898.6 281.8 L903.6 276.8 L899.6 275.8Z" fill="#999" opacity=".6"/>
<path d="M892.6 279.8 C889.6 274.8 884.1 270.8 884.1 264.8 A8.5 8.5 0 0 1 901.1 264.8 C901.1 270.8 895.6 274.8 892.6 279.8Z" fill="#e8262a" stroke="#c41a1e" stroke-width="0.6"/>
<path d="M913.4 279.7 L918.4 274.7 L914.4 273.7Z" fill="#999" opacity=".6"/>
<path d="M907.4 277.7 C904.4 272.7 898.9 268.7 898.9 262.7 A8.5 8.5 0 0 1 915.9 262.7 C915.9 268.7 910.4 272.7 907.4 277.7Z" fill="#e8262a" stroke="#c41a1e" stroke-width="0.6"/>
<path d="M954.5 281.8 L959.5 276.8 L955.5 275.8Z" fill="#999" opacity=".6"/>
<path d="M948.5 279.8 C945.5 274.8 940.0 270.8 940.0 264.8 A8.5 8.5 0 0 1 957.0 264.8 C957.0 270.8 951.5 274.8 948.5 279.8Z" fill="#e8262a" stroke="#c41a1e" stroke-width="0.6"/>
<path d="M993.6 281.8 L998.6 276.8 L994.6 275.8Z" fill="#999" opacity=".6"/>
<path d="M987.6 279.8 C984.6 274.8 979.1 270.8 979.1 264.8 A8.5 8.5 0 0 1 996.1 264.8 C996.1 270.8 990.6 274.8 987.6 279.8Z" fill="#e8262a" stroke="#c41a1e" stroke-width="0.6"/>
<path d="M1009.5 278.6 L1014.5 273.6 L1010.5 272.6Z" fill="#999" opacity=".6"/>
<path d="M1003.5 276.6 C1000.5 271.6 995.0 267.6 995.0 261.6 A8.5 8.5 0 0 1 1012.0 261.6 C1012.0 267.6 1006.5 271.6 1003.5 276.6Z" fill="#e8262a" stroke="#c41a1e" stroke-width="0.6"/>
<path d="M1020 276.5 L1025 271.5 L1021 270.5Z" fill="#999" opacity=".6"/>
<path d="M1014 274.5 C1011 269.5 1005.5 265.5 1005.5 259.5 A8.5 8.5 0 0 1 1022.5 259.5 C1022.5 265.5 1017 269.5 1014 274.5Z" fill="#e8262a" stroke="#c41a1e" stroke-width="0.6"/>
<path d="M1030.7 278.6 L1035.7 273.6 L1031.7 272.6Z" fill="#999" opacity=".6"/>
<path d="M1024.7 276.6 C1021.7 271.6 1016.2 267.6 1016.2 261.6 A8.5 8.5 0 0 1 1033.2 261.6 C1033.2 267.6 1027.7 271.6 1024.7 276.6Z" fill="#e8262a" stroke="#c41a1e" stroke-width="0.6"/>
<path d="M1042 275.5 L1047 270.5 L1043 269.5Z" fill="#999" opacity=".6"/>
<path d="M1036 273.5 C1033 268.5 1027.5 264.5 1027.5 258.5 A8.5 8.5 0 0 1 1044.5 258.5 C1044.5 264.5 1039 268.5 1036 273.5Z" fill="#e8262a" stroke="#c41a1e" stroke-width="0.6"/>
<path d="M1049.8 270 L1054.8 265 L1050.8 264Z" fill="#999" opacity=".6"/>
<path d="M1043.8 268 C1040.8 263 1035.3 259 1035.3 253 A8.5 8.5 0 0 1 1052.3 253 C1052.3 259 1046.8 263 1043.8 268Z" fill="#e8262a" stroke="#c41a1e" stroke-width="0.6"/>
<g><rect x="13.5" y="343.5" width="73.5" height="15.5" rx="2" fill="#fff" stroke="#ddd" stroke-width="0.6"/><text x="15.5" y="357" font-size="16" font-weight="bold" fill="#d21a1a" letter-spacing="-0.3">Bai</text><ellipse cx="50.3" cy="351.5" rx="9.2" ry="7" fill="#2a2ad0" stroke="#fff" stroke-width="1"/><circle cx="43" cy="343.5" r="2.6" fill="#2a2ad0"/><circle cx="47.2" cy="338" r="2.6" fill="#2a2ad0"/><circle cx="54.4" cy="338.6" r="2.6" fill="#2a2ad0"/><circle cx="58.6" cy="344.5" r="2.6" fill="#2a2ad0"/><ellipse cx="50.3" cy="353.5" rx="5.5" ry="3.6" fill="#fff"/><text x="50.3" y="356.3" font-size="7.5" font-weight="bold" fill="#2a2ad0" text-anchor="middle">du</text><text x="62" y="356.5" font-size="11.5" font-weight="bold" fill="#d21a1a">地图</text></g>
<text x="14" y="375.5" font-size="12" fill="#222" stroke="#f7f7f6" stroke-width="2" paint-order="stroke">© 2020 Baidu - GS(2019)5218号 - 甲测资字1100930 - 京ICP证030173号 - Data © 长地万方 &amp; <tspan fill="#6b6bd6">OpenStreetMap</tspan> &amp; <tspan fill="#6b6bd6">HERE</tspan></text>
</svg></div>
<div class="abs" style="left:0px;top:299px">
<table id="tbl">
<colgroup><col style="width:73px"><col style="width:299px"><col style="width:281px"><col style="width:131px"><col style="width:243px"><col style="width:187px"><col style="width:187px"><col style="width:187px"><col style="width:285px"></colgroup>
<tr class="hd"><th>序号</th><th>计划单位</th><th>任务名称</th><th>巡查状态</th><th>巡查部门</th><th>开始时间</th><th>结束时间</th><th>任务提醒</th><th>操作</th></tr>
<tr><td class="n">1</td><td>宁扬管理处</td><td><a>2020年五一节前巡查（ETC专用道江苏海<br>岭）-东南智能</a></td><td>完成</td><td>东南智能</td><td class="n">2020-04-28 23:29:01</td><td class="n">2020-04-30 23:29:05</td><td class="n">2020-04-28 23:29:11</td><td><span class="eye"><svg width="22" height="16" viewBox="0 0 22 16"><path d="M1.5 8 C4.5 -1.5 17.5 -1.5 20.5 8 C17.5 17.5 4.5 17.5 1.5 8Z" fill="#7aa85a"/><ellipse cx="11" cy="8" rx="3.7" ry="4.2" fill="#e6f3da"/><ellipse cx="11" cy="8" rx="2.1" ry="2.6" fill="#6e9350"/></svg></span></td></tr>
<tr><td class="n">2</td><td>宁扬管理处</td><td><a>2020年五一节前巡检（软件西安所）-陕西公<br>路科技开发咨询有限公司</a></td><td>完成</td><td>陕西公路科技开发咨询有限公司</td><td class="n">2020-04-28 22:35:06</td><td class="n">2020-04-30 22:35:10</td><td class="n">2020-04-28 22:35:16</td><td><span class="eye"><svg width="22" height="16" viewBox="0 0 22 16"><path d="M1.5 8 C4.5 -1.5 17.5 -1.5 20.5 8 C17.5 17.5 4.5 17.5 1.5 8Z" fill="#7aa85a"/><ellipse cx="11" cy="8" rx="3.7" ry="4.2" fill="#e6f3da"/><ellipse cx="11" cy="8" rx="2.1" ry="2.6" fill="#6e9350"/></svg></span></td></tr>
<tr><td class="n">3</td><td>宁扬管理处</td><td><a>2020年五一节前巡检（信息公司）-信息公司</a></td><td>完成</td><td>信息公司</td><td class="n">2020-04-28 22:25:37</td><td class="n">2020-04-30 22:15:06</td><td class="n">2020-04-28 22:25:39</td><td><span class="eye"><svg width="22" height="16" viewBox="0 0 22 16"><path d="M1.5 8 C4.5 -1.5 17.5 -1.5 20.5 8 C17.5 17.5 4.5 17.5 1.5 8Z" fill="#7aa85a"/><ellipse cx="11" cy="8" rx="3.7" ry="4.2" fill="#e6f3da"/><ellipse cx="11" cy="8" rx="2.1" ry="2.6" fill="#6e9350"/></svg></span></td></tr>
<tr><td class="n">4</td><td>扬州管理处</td><td><a>2020年五一节前巡检-信息公司</a></td><td>任务进行中</td><td>信息公司</td><td class="n">2020-04-27 18:36:32</td><td class="n">2020-04-30 23:59:59</td><td class="n">2020-04-27 18:00:38</td><td><span class="eye"><svg width="22" height="16" viewBox="0 0 22 16"><path d="M1.5 8 C4.5 -1.5 17.5 -1.5 20.5 8 C17.5 17.5 4.5 17.5 1.5 8Z" fill="#7aa85a"/><ellipse cx="11" cy="8" rx="3.7" ry="4.2" fill="#e6f3da"/><ellipse cx="11" cy="8" rx="2.1" ry="2.6" fill="#6e9350"/></svg></span></td></tr>
<tr><td class="n">5</td><td>扬州管理处</td><td><a>2020年五一节前巡检-陕西公路交通科技开发<br>咨询公司</a></td><td>任务进行中</td><td>陕西公路交通科技开发咨询公司</td><td class="n">2020-04-27 11:20:21</td><td class="n">2020-04-30 23:59:59</td><td class="n">2020-04-27 11:00:42</td><td><span class="eye"><svg width="22" height="16" viewBox="0 0 22 16"><path d="M1.5 8 C4.5 -1.5 17.5 -1.5 20.5 8 C17.5 17.5 4.5 17.5 1.5 8Z" fill="#7aa85a"/><ellipse cx="11" cy="8" rx="3.7" ry="4.2" fill="#e6f3da"/><ellipse cx="11" cy="8" rx="2.1" ry="2.6" fill="#6e9350"/></svg></span></td></tr>
<tr><td class="n">6</td><td>扬州管理处</td><td><a>2020年五一节前巡检-陕西公路交通科技开发<br>咨询公司</a></td><td>任务进行中</td><td>陕西公路交通科技开发咨询公司</td><td class="n">2020-04-27 11:28:26</td><td class="n">2020-04-30 23:59:59</td><td class="n">2020-04-27 11:00:33</td><td><span class="eye"><svg width="22" height="16" viewBox="0 0 22 16"><path d="M1.5 8 C4.5 -1.5 17.5 -1.5 20.5 8 C17.5 17.5 4.5 17.5 1.5 8Z" fill="#7aa85a"/><ellipse cx="11" cy="8" rx="3.7" ry="4.2" fill="#e6f3da"/><ellipse cx="11" cy="8" rx="2.1" ry="2.6" fill="#6e9350"/></svg></span></td></tr>
<tr><td class="n">7</td><td>扬州管理处</td><td><a>2020年五一节前巡检-信息公司</a></td><td>任务进行中</td><td>信息公司</td><td class="n">2020-04-27 11:26:53</td><td class="n">2020-04-30 23:59:59</td><td class="n">2020-04-27 11:00:04</td><td><span class="eye"><svg width="22" height="16" viewBox="0 0 22 16"><path d="M1.5 8 C4.5 -1.5 17.5 -1.5 20.5 8 C17.5 17.5 4.5 17.5 1.5 8Z" fill="#7aa85a"/><ellipse cx="11" cy="8" rx="3.7" ry="4.2" fill="#e6f3da"/><ellipse cx="11" cy="8" rx="2.1" ry="2.6" fill="#6e9350"/></svg></span></td></tr>
<tr><td class="n">8</td><td>扬州管理处</td><td><a>2020年五一节前巡检-陕西公路交通科技开发<br>咨询公司</a></td><td>任务进行中</td><td>陕西公路交通科技开发咨询公司</td><td class="n">2020-04-27 11:23:24</td><td class="n">2020-04-30 23:59:59</td><td class="n">2020-04-27 11:00:39</td><td><span class="eye"><svg width="22" height="16" viewBox="0 0 22 16"><path d="M1.5 8 C4.5 -1.5 17.5 -1.5 20.5 8 C17.5 17.5 4.5 17.5 1.5 8Z" fill="#7aa85a"/><ellipse cx="11" cy="8" rx="3.7" ry="4.2" fill="#e6f3da"/><ellipse cx="11" cy="8" rx="2.1" ry="2.6" fill="#6e9350"/></svg></span></td></tr>
<tr><td class="n">9</td><td>扬州管理处</td><td><a>2020年五一节前巡检-信息公司</a></td><td>任务进行中</td><td>信息公司</td><td class="n">2020-04-27 11:18:39</td><td class="n">2020-04-30 23:59:59</td><td class="n">2020-04-27 11:00:55</td><td><span class="eye"><svg width="22" height="16" viewBox="0 0 22 16"><path d="M1.5 8 C4.5 -1.5 17.5 -1.5 20.5 8 C17.5 17.5 4.5 17.5 1.5 8Z" fill="#7aa85a"/><ellipse cx="11" cy="8" rx="3.7" ry="4.2" fill="#e6f3da"/><ellipse cx="11" cy="8" rx="2.1" ry="2.6" fill="#6e9350"/></svg></span></td></tr>
<tr><td class="n">10</td><td>淮安管理处</td><td><a>五一节前免费设备巡检-信息公司</a></td><td>任务进行中</td><td>信息公司</td><td class="n">2020-04-26 14:46:09</td><td class="n">2020-04-30 11:46:29</td><td class="n">2020-04-26 12:46:17</td><td><span class="eye"><svg width="22" height="16" viewBox="0 0 22 16"><path d="M1.5 8 C4.5 -1.5 17.5 -1.5 20.5 8 C17.5 17.5 4.5 17.5 1.5 8Z" fill="#7aa85a"/><ellipse cx="11" cy="8" rx="3.7" ry="4.2" fill="#e6f3da"/><ellipse cx="11" cy="8" rx="2.1" ry="2.6" fill="#6e9350"/></svg></span></td></tr>
<tr><td class="n">11</td><td>淮安管理处</td><td><a>五一节前免费设备巡检-陕西公路交通科技开<br>发咨询公司</a></td><td>任务进行中</td><td>陕西公路交通科技开发咨询公司</td><td class="n">2020-04-26 15:43:37</td><td class="n">2020-04-30 11:43:49</td><td class="n">2020-04-26 12:43:58</td><td><span class="eye"><svg width="22" height="16" viewBox="0 0 22 16"><path d="M1.5 8 C4.5 -1.5 17.5 -1.5 20.5 8 C17.5 17.5 4.5 17.5 1.5 8Z" fill="#7aa85a"/><ellipse cx="11" cy="8" rx="3.7" ry="4.2" fill="#e6f3da"/><ellipse cx="11" cy="8" rx="2.1" ry="2.6" fill="#6e9350"/></svg></span></td></tr>
<tr><td class="n">12</td><td>徐宿管理处</td><td><a>五一节前巡检-陕西公路交通科技开发咨询公<br>司</a></td><td>完成</td><td>陕西公路交通科技开发咨询公司</td><td class="n">2020-04-24 08:35:42</td><td class="n">2020-04-30 23:35:48</td><td class="n">2020-04-24 07:40:59</td><td><span class="eye"><svg width="22" height="16" viewBox="0 0 22 16"><path d="M1.5 8 C4.5 -1.5 17.5 -1.5 20.5 8 C17.5 17.5 4.5 17.5 1.5 8Z" fill="#7aa85a"/><ellipse cx="11" cy="8" rx="3.7" ry="4.2" fill="#e6f3da"/><ellipse cx="11" cy="8" rx="2.1" ry="2.6" fill="#6e9350"/></svg></span></td></tr>
<tr><td class="n">13</td><td>徐宿管理处</td><td><a>五一节前巡检-信息公司</a></td><td>完成</td><td>信息公司</td><td class="n">2020-04-24 08:33:55</td><td class="n">2020-04-30 23:33:04</td><td class="n">2020-04-24 07:40:25</td><td><span class="eye"><svg width="22" height="16" viewBox="0 0 22 16"><path d="M1.5 8 C4.5 -1.5 17.5 -1.5 20.5 8 C17.5 17.5 4.5 17.5 1.5 8Z" fill="#7aa85a"/><ellipse cx="11" cy="8" rx="3.7" ry="4.2" fill="#e6f3da"/><ellipse cx="11" cy="8" rx="2.1" ry="2.6" fill="#6e9350"/></svg></span></td></tr>
</table>
</div>
  </div>
</div>
<div class="abs" style="left:1885px;top:124px;width:1px;height:810px;background:#b0b0b0;z-index:3"></div>
<div id="sb" class="abs"><svg class="abs" style="left:0;top:0" width="17" height="865"><path d="M4.5 22 L8.5 17.5 L12.5 22Z" fill="#a3a3a3"/><rect x="2" y="27" width="13" height="426" fill="#c1c1c1"/><path d="M4.5 847.5 L8.5 852 L12.5 847.5Z" fill="#505050"/></svg></div>
<div id="foot" class="abs">Copyright ©2016 江苏京沪高速公路有限公司 · 南京感动科技有限公司</div>
<div class="abs" style="left:1610px;top:895px;width:305px;height:73px;z-index:20;pointer-events:none;overflow:hidden;opacity:.42">
<svg class="abs" style="left:0;top:0" width="305" height="73"><ellipse cx="53.5" cy="43" rx="20.5" ry="21.5" fill="none" stroke="#8c8c8c" stroke-width="7.5"/><path d="M40 31 L64 24 L52 56Z" fill="#8c8c8c"/></svg>
<div class="abs" style="left:102px;top:14px;font-size:52px;font-weight:bold;line-height:62px;color:#8c8c8c;-webkit-text-stroke:2.2px #8c8c8c;white-space:nowrap;letter-spacing:0px">感动科技</div></div>
</body></html>
